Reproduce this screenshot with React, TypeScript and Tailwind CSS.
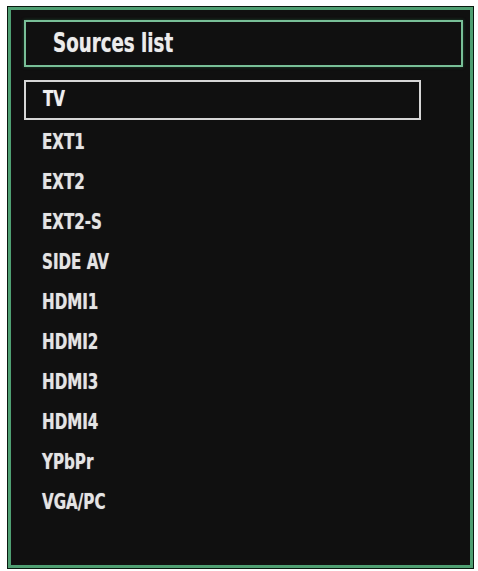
import React from 'react';

const sources = ['EXT1', 'EXT2', 'EXT2-S', 'SIDE AV', 'HDMI1', 'HDMI2', 'HDMI3', 'HDMI4', 'YPbPr', 'VGA/PC'];

export default function App() {
  return (
    <div className="w-[478px] h-[571px] bg-white pt-[7px] pl-[8px]" style={{ fontFamily: '"DejaVu Sans Condensed", "DejaVu Sans", sans-serif' }}>
      <div className="w-[465px] h-[561px] bg-[#101010] border-[3px] border-[#4f9f72] shadow-[0_0_0_1px_#0a1a10] pt-[10px] pl-[13px] pr-[7px]">
        {/* header */}
        <div className="h-[47px] border-2 border-[#78bf97] flex items-center pl-[27px] shadow-[0_0_3px_#1f4a30]">
          <span className="inline-block origin-left scale-x-[0.78] text-[26px] font-bold text-[#ececec] [text-shadow:0_0_1px_#ffffff80]">Sources list</span>
        </div>

        {/* selected item */}
        <div className="mt-[13px] w-[397px] h-[40px] border-2 border-[#d6d6d6] flex items-center pl-[17px]">
          <span className="inline-block origin-left scale-x-[0.8] text-[21px] font-bold text-[#f0f0f0] [text-shadow:0_0_1px_#ffffff80]">TV</span>
        </div>

        <div className="flex flex-col pt-[3px]">
          {sources.map((s, i) => (
            <div key={i} className="h-[40px] flex items-center pl-[18px]">
              <span className="inline-block origin-left scale-x-[0.8] text-[21px] font-bold text-[#e4e4e4] [text-shadow:0_0_1px_#ffffff80]">{s}</span>
            </div>
          ))}
        </div>
      </div>
    </div>
  );
}
